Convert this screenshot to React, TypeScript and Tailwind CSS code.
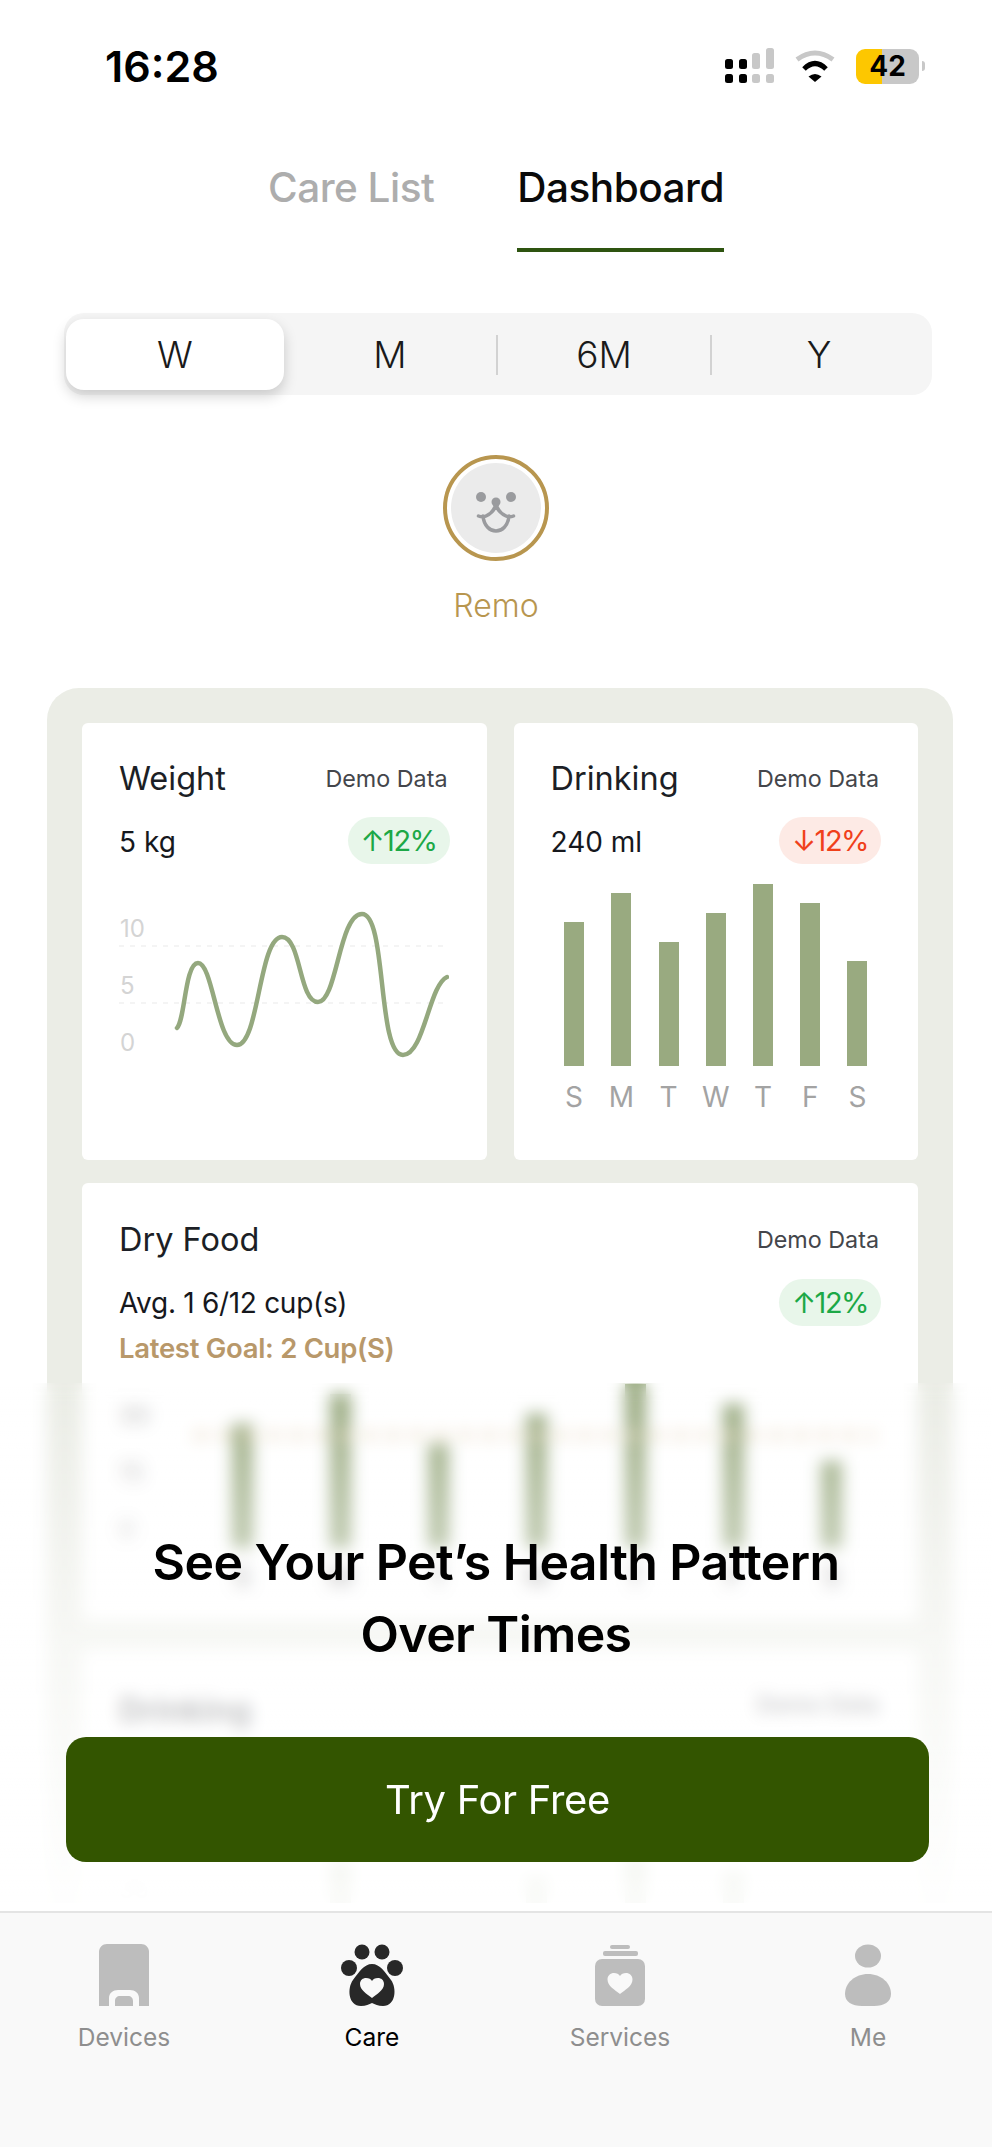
import React from 'react';

const days = ['S', 'M', 'T', 'W', 'T', 'F', 'S'];
const drinkingBars = [144, 173, 124, 153, 182, 163, 105];
const foodBars = [124, 154, 104, 134, 164, 144, 87];
const lowerBars = [60, 164, 90, 148, 168, 153, 40];

const CardHeader = ({ title }: { title: string }) => (
  <div className="flex items-center justify-between">
    <span className="text-[32.5px] leading-[40px] text-[#1c1f26]">{title}</span>
    <span className="mr-[2px] text-[23.3px] leading-[40px] text-[#44464b]">Demo Data</span>
  </div>
);

const Trend = ({ up }: { up: boolean }) => (
  <span
    className={`flex h-[47px] w-[102px] items-center justify-center rounded-full text-[29px] tracking-[-1.5px] ${
      up ? 'bg-[#e8f6ea] text-[#1ca846]' : 'bg-[#fdeae5] text-[#f0401a]'
    }`}
  >
    {up ? '↑' : '↓'}12%
  </span>
);

const WeightChart = () => (
  <svg className="mt-[16px] block" width="330" height="200" viewBox="0 0 330 200" fill="none">
    <line x1="0" y1="66" x2="330" y2="66" stroke="#f1f1f1" strokeWidth="1.5" strokeDasharray="5 6" />
    <line x1="0" y1="123" x2="330" y2="123" stroke="#f1f1f1" strokeWidth="1.5" strokeDasharray="5 6" />
    <text x="1" y="57" fontSize="24" fill="#d4d4d4">10</text>
    <text x="1" y="114" fontSize="24" fill="#d4d4d4">5</text>
    <text x="1" y="171" fontSize="24" fill="#d4d4d4">0</text>
    <path
      d="M58 148C66 140 66 83 79 83C94 83 98 165 118 165C140 165 140 57 163 57C182 57 180 122 199 122C218 122 220 34 243 34C268 34 258 175 284 175C305 175 310 105 328 97"
      stroke="#94a87e"
      strokeWidth="4.5"
      strokeLinecap="round"
    />
  </svg>
);

const DrinkingChart = () => (
  <div className="mt-[20px]">
    <div className="grid h-[182px] grid-cols-7 items-end">
      {drinkingBars.map((h, i) => (
        <div key={i} className="mx-auto w-[20px] bg-[#99aa80]" style={{ height: h }} />
      ))}
    </div>
    <div className="mt-[14px] grid grid-cols-7 text-center text-[28px] leading-[34px] text-[#a3a3a3]">
      {days.map((d, i) => (
        <span key={i}>{d}</span>
      ))}
    </div>
  </div>
);

const FoodChart = ({ bars, labels }: { bars: number[]; labels: string[] }) => (
  <div className="mt-[20px]">
    <div className="relative flex h-[164px]">
      <div className="flex w-[74px] flex-col gap-[27px] pt-[17px] text-[24px] leading-[30px] font-medium text-[#c4c4c4]">
        {labels.map((l) => (
          <span key={l}>{l}</span>
        ))}
      </div>
      <div className="grid flex-1 grid-cols-7 items-end">
        {bars.map((h, i) => (
          <div key={i} className="mx-auto w-[21px] bg-[#99aa80]" style={{ height: h }} />
        ))}
      </div>
      <div className="absolute top-[49px] right-[6px] left-[75px] h-[5px] bg-[repeating-linear-gradient(90deg,#e6d3b3_0_14px,transparent_14px_24px)]" />
    </div>
    <div className="mt-[12px] ml-[74px] grid grid-cols-7 text-center text-[28px] leading-[34px] font-medium text-[#8f8f8f]">
      {days.map((d, i) => (
        <span key={i}>{d}</span>
      ))}
    </div>
  </div>
);

const StatusBar = () => (
  <div className="flex h-[88px] items-start pt-[44px] pr-[67px] pl-[105px]">
    <span className="text-[43px] leading-[44px] font-semibold text-black">16:28</span>
    <div className="ml-auto flex h-[44px] items-center">
      <svg width="50" height="36" viewBox="0 0 50 36">
        <rect x="0" y="11" width="8" height="10" rx="2.5" fill="#000" />
        <rect x="14" y="11" width="8" height="10" rx="2.5" fill="#000" />
        <rect x="27" y="5" width="8" height="16" rx="2.5" fill="#c8c8c8" />
        <rect x="41" y="0" width="8" height="21" rx="2.5" fill="#c8c8c8" />
        <rect x="0" y="26" width="8" height="9" rx="2.5" fill="#000" />
        <rect x="14" y="26" width="8" height="9" rx="2.5" fill="#000" />
        <rect x="27" y="26" width="8" height="9" rx="2.5" fill="#c8c8c8" />
        <rect x="41" y="26" width="8" height="9" rx="2.5" fill="#c8c8c8" />
      </svg>
      <svg className="ml-[19px]" width="42" height="33" viewBox="0 0 42 33" fill="none">
        <path d="M3 9.5Q21 -3.5 39 9.5" stroke="#c8c8c8" strokeWidth="5" />
        <path d="M10 19Q21 8 32 19" stroke="#000" strokeWidth="5" />
        <path d="M14.5 26.5Q21 21.5 27.5 26.5L21 32Z" fill="#000" />
      </svg>
      <div className="ml-[20px] flex h-[35px] w-[63px] items-center justify-center overflow-hidden rounded-[9px] bg-[linear-gradient(90deg,#fdc700_41%,#c8c8c8_41%)] text-[28px] font-bold text-black">
        42
      </div>
      <div className="ml-[3px] h-[10px] w-[3px] rounded-r-full bg-[#c8c8c8]" />
    </div>
  </div>
);

const Tabs = () => (
  <div className="flex h-[164px] justify-center gap-[83px] pt-[76px] text-[40.5px] leading-[48px] font-medium tracking-[-0.5px]">
    <span className="text-[#adadad]">Care List</span>
    <div className="flex flex-col">
      <span className="text-[#0a0a0a]">Dashboard</span>
      <div className="mt-[36px] h-[4px] bg-[#2e5410]" />
    </div>
  </div>
);

const RangePicker = () => (
  <div className="mt-[61px] ml-[64px] flex h-[82px] w-[868px] items-center rounded-[20px] bg-[#f5f5f5] px-[2px] pt-[1px] text-[37px] font-light text-[#1a1a1a]">
    <div className="flex h-[71px] w-[218px] items-center justify-center rounded-[18px] bg-white shadow-[0_6px_14px_rgba(0,0,0,0.18)]">
      W
    </div>
    <span className="w-[212px] text-center">M</span>
    <div className="h-[40px] w-[2px] bg-[#d2d2d2]" />
    <span className="w-[212px] text-center">6M</span>
    <div className="h-[40px] w-[2px] bg-[#d2d2d2]" />
    <span className="flex-1 pr-[4px] text-center">Y</span>
  </div>
);

const PetAvatar = () => (
  <div className="mt-[60px] flex flex-col items-center">
    <div className="h-[106px] w-[106px] rounded-full border-[4px] border-[#b8964f] p-[4px]">
      <div className="flex h-full w-full items-center justify-center rounded-full bg-[#ebebeb]">
        <svg width="60" height="50" viewBox="0 0 60 50" fill="none" className="mt-[8px]">
          <circle cx="15" cy="10" r="5" fill="#9a9b9e" />
          <circle cx="45" cy="10" r="5" fill="#9a9b9e" />
          <circle cx="30" cy="15" r="4.5" fill="#9a9b9e" />
          <path
            d="M30 15C30 22 26 26 20 29C17 30.5 15 30 12.5 29M30 15C30 22 34 26 40 29C43 30.5 45 30 47.5 29M17 29C18 39 24 44 30 44C36 44 42 39 43 29"
            stroke="#9a9b9e"
            strokeWidth="3.5"
            strokeLinecap="round"
          />
        </svg>
      </div>
    </div>
    <span className="mt-[25px] text-[32px] leading-[40px] font-light text-[#b8964f]">Remo</span>
  </div>
);

const Dashboard = () => (
  <div className="mt-[62px] ml-[47px] w-[906px] rounded-[32px] bg-[#ebede6] p-[35px]">
    <div className="grid grid-cols-2 gap-[27px]">
      <div className="h-[437px] rounded-[6px] bg-white px-[37px] pt-[36px]">
        <CardHeader title="Weight" />
        <div className="mt-[18px] flex items-center justify-between">
          <span className="pt-[2px] text-[28px] text-[#16181d]">5 kg</span>
          <Trend up />
        </div>
        <WeightChart />
      </div>
      <div className="h-[437px] rounded-[6px] bg-white px-[37px] pt-[36px]">
        <CardHeader title="Drinking" />
        <div className="mt-[18px] flex items-center justify-between">
          <span className="pt-[2px] text-[28px] text-[#16181d]">240 ml</span>
          <Trend up={false} />
        </div>
        <DrinkingChart />
      </div>
    </div>
    <div className="mt-[23px] h-[438px] rounded-[6px] bg-white px-[37px] pt-[37px]">
      <CardHeader title="Dry Food" />
      <div className="mt-[19px] flex items-center justify-between">
        <span className="text-[28px] tracking-[-0.3px] text-[#16181d]">Avg. 1 6/12 cup(s)</span>
        <Trend up />
      </div>
      <div className="mt-[6px] text-[27.5px] leading-[32px] font-semibold tracking-[-0.3px] text-[#b8986a]">
        Latest Goal: 2 Cup(S)
      </div>
      <FoodChart bars={foodBars} labels={['30', '15', '0']} />
    </div>
    <div className="mt-[29px] h-[438px] rounded-[6px] bg-white px-[37px] pt-[35px]">
      <div className="flex items-center justify-between">
        <span className="text-[32.5px] leading-[40px] font-semibold text-[#1c1f26]">Drinking</span>
        <span className="mr-[2px] mb-[12px] text-[23.3px] leading-[40px] font-medium text-[#44464b]">Demo Data</span>
      </div>
      <div className="mt-[121px]">
        <FoodChart bars={lowerBars} labels={['30', '15', '0']} />
      </div>
    </div>
  </div>
);

const UpgradeOverlay = () => (
  <div className="absolute top-[1383px] right-0 bottom-0 left-0 bg-linear-to-b from-white/0 via-white/60 via-50% to-white/95 pt-[143px] backdrop-blur-[8px]">
    <h2 className="text-center text-[50px] leading-[72px] font-semibold tracking-[-0.6px] text-black">
      See Your Pet’s Health Pattern
      <br />
      Over Times
    </h2>
    <button className="mt-[67px] ml-[66px] flex h-[125px] w-[863px] items-center justify-center rounded-[20px] bg-[#335500] text-[40px] tracking-[-0.3px] text-white">
      Try For Free
    </button>
  </div>
);

const DevicesIcon = () => (
  <svg width="52" height="62" viewBox="0 0 52 62">
    <path d="M9 0H43C47.5 0 51 3.5 51 8V62H1V8C1 3.5 4.5 0 9 0Z" fill="#bdbdbd" />
    <path d="M11 62V54C11 49 15 46 20 46H32C37 46 41 49 41 54V62H35V57C35 54 33 52 30 52H22C19 52 17 54 17 57V62Z" fill="#f9f9f9" />
  </svg>
);

const CareIcon = () => (
  <svg width="62" height="62" viewBox="0 0 62 62" fill="#282828">
    <circle cx="21" cy="8" r="7.5" />
    <circle cx="41" cy="8" r="7.5" />
    <circle cx="8" cy="24" r="8" />
    <circle cx="54" cy="24" r="8" />
    <path d="M31 20C39 20 44 28 50 36C56 44 55 62 42 62C37 62 34 60 31 59C28 60 25 62 20 62C7 62 6 44 12 36C18 28 23 20 31 20Z" />
    <path
      d="M31 54C26 50 19 46 19 40C19 36 22 34 25 34C28 34 30 35 31 37C32 35 34 34 37 34C40 34 43 36 43 40C43 46 36 50 31 54Z"
      fill="#f9f9f9"
    />
  </svg>
);

const ServicesIcon = () => (
  <svg width="50" height="62" viewBox="0 0 50 62" fill="#bdbdbd">
    <rect x="15" y="1" width="20" height="4" rx="2" />
    <rect x="8" y="7" width="35" height="5" rx="2" />
    <rect x="0" y="15" width="50" height="47" rx="7" />
    <path
      d="M25 50C20 46 12.5 42 12.5 35.5C12.5 31.5 15.5 29 19 29C21.5 29 24 30 25 32C26 30 28.5 29 31 29C34.5 29 37.5 31.5 37.5 35.5C37.5 42 30 46 25 50Z"
      fill="#f9f9f9"
    />
  </svg>
);

const MeIcon = () => (
  <svg width="48" height="62" viewBox="0 0 48 62" fill="#bdbdbd">
    <ellipse cx="24" cy="12" rx="13" ry="11.5" />
    <path d="M24 30C37 30 47 39 47 50C47 58 40 62 30 62H18C8 62 1 58 1 50C1 39 11 30 24 30Z" />
  </svg>
);

const navItems = [
  { label: 'Devices', icon: <DevicesIcon />, active: false },
  { label: 'Care', icon: <CareIcon />, active: true },
  { label: 'Services', icon: <ServicesIcon />, active: false },
  { label: 'Me', icon: <MeIcon />, active: false },
];

const BottomNav = () => (
  <nav className="grid h-[236px] grid-cols-4 border-t-[2px] border-[#e4e4e4] bg-[#f9f9f9] pt-[31px]">
    {navItems.map((item) => (
      <div key={item.label} className="flex flex-col items-center">
        {item.icon}
        <span className={`mt-[15px] text-[24.5px] leading-[32px] ${item.active ? 'text-black' : 'text-[#8e8e8e]'}`}>
          {item.label}
        </span>
      </div>
    ))}
  </nav>
);

export default function App() {
  return (
    <div className="flex h-[2147px] w-full flex-col overflow-hidden bg-white font-['Inter','Liberation_Sans',sans-serif]">
      <div className="relative min-h-0 flex-1 overflow-hidden">
        <StatusBar />
        <Tabs />
        <RangePicker />
        <PetAvatar />
        <Dashboard />
        <UpgradeOverlay />
      </div>
      <div className="h-[8px] bg-white" />
      <BottomNav />
    </div>
  );
}
